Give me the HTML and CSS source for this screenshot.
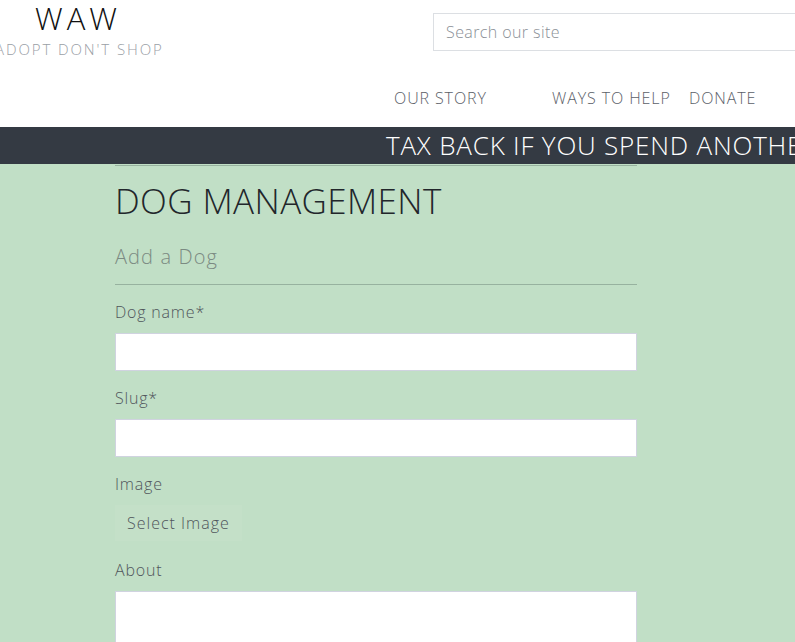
FILE: index.html
```html
<!DOCTYPE html>
<html lang="en">
<head>
<meta charset="utf-8">
<title>WAW - Dog Management</title>
<link rel="stylesheet" href="styles.css">
</head>
<body>
<header class="site-header">
  <div class="header-top">
    <div class="brand">
      <div class="brand-name">WAW</div>
      <div class="brand-tag">ADOPT DON'T SHOP</div>
    </div>
    <div class="search">
      <input class="search-input" type="text" placeholder="Search our site">
    </div>
  </div>
  <nav class="main-nav">
    <a class="nav-link nav-story" href="#">OUR STORY</a>
    <a class="nav-link nav-help" href="#">WAYS TO HELP</a>
    <a class="nav-link" href="#">DONATE</a>
  </nav>
</header>
<div class="ticker">
  <div class="ticker-text">TAX BACK IF YOU SPEND ANOTHER</div>
</div>
<main class="content">
  <div class="panel">
    <h1 class="page-title">DOG MANAGEMENT</h1>
    <h2 class="sub-title">Add a Dog</h2>
    <form class="dog-form">
      <label class="field-label">Dog name*</label>
      <input class="field-input" type="text">
      <label class="field-label">Slug*</label>
      <input class="field-input" type="text">
      <label class="field-label">Image</label>
      <button class="select-btn" type="button">Select Image</button>
      <label class="field-label">About</label>
      <textarea class="field-area"></textarea>
    </form>
  </div>
</main>
</body>
</html>
```

FILE: styles.css
```css
* { box-sizing: border-box; }
html, body { margin: 0; padding: 0; }
body {
  font-family: "Open Sans", "Liberation Sans", sans-serif;
  font-weight: 300;
  background: #c1dfc6;
  overflow: hidden;
  width: 795px;
  height: 642px;
}
.site-header {
  background: #ffffff;
  height: 127px;
}
.header-top {
  display: flex;
  align-items: flex-start;
  height: 62px;
}
.brand {
  flex-shrink: 0;
  width: 172px;
  margin-left: -11px;
  text-align: center;
  white-space: nowrap;
}
.brand-name {
  font-size: 31px;
  line-height: 36px;
  color: #111;
  font-weight: 300;
  letter-spacing: 4px;
  text-indent: 6px;
}
.brand-tag {
  font-size: 15px;
  line-height: 22px;
  color: #9aa0a6;
  font-weight: 300;
  letter-spacing: 1.9px;
  text-indent: 6px;
  margin-top: 2px;
}
.search {
  flex: 1;
  margin-left: 272px;
  padding-top: 13px;
}
.search-input {
  display: block;
  width: 420px;
  height: 38px;
  border: 1px solid #dcdfe3;
  padding: 0 12px;
  font-family: inherit;
  font-weight: 300;
  font-size: 16px;
  letter-spacing: 0.4px;
  color: #333;
  outline: none;
}
.search-input::placeholder { color: #8a8f96; }
.main-nav {
  display: flex;
  padding-left: 394px;
  margin-top: 25px;
  white-space: nowrap;
}
.nav-link {
  font-size: 16px;
  line-height: 22px;
  color: #5b6068;
  text-decoration: none;
  letter-spacing: 0.9px;
}
.nav-story { width: 158px; }
.nav-help { width: 137px; }
.ticker {
  background: #343a43;
  height: 37px;
  overflow: hidden;
  white-space: nowrap;
  padding-left: 386px;
}
.ticker-text {
  font-size: 26px;
  line-height: 37px;
  color: #ffffff;
  font-weight: 300;
  letter-spacing: 0.8px;
}
.content {
  padding-left: 115px;
}
.panel {
  width: 522px;
  border-top: 1px solid #97b29f;
  margin-top: 1px;
}
.page-title {
  margin: 15px 0 0;
  font-size: 35px;
  line-height: 40px;
  font-weight: 300;
  color: #22262b;
  letter-spacing: 0.4px;
}
.sub-title {
  margin: 22px 0 0;
  font-size: 20px;
  line-height: 28px;
  font-weight: 300;
  color: #7b8a82;
  letter-spacing: 1.1px;
  padding-bottom: 13px;
  border-bottom: 1px solid #97b29f;
}
.dog-form {
  display: flex;
  flex-direction: column;
  align-items: flex-start;
  padding-top: 16px;
}
.field-label {
  font-size: 16px;
  line-height: 22px;
  color: #50565c;
  letter-spacing: 0.8px;
  margin-bottom: 10px;
}
.field-input {
  width: 522px;
  height: 38px;
  background: #fff;
  border: 1px solid #d0d3e0;
  margin-bottom: 16px;
  outline: none;
}
.select-btn {
  font-family: inherit;
  font-weight: 300;
  font-size: 16px;
  letter-spacing: 1px;
  color: #50565c;
  background: #c4e0c8;
  border: none;
  padding: 0 12px;
  height: 36px;
  margin-bottom: 18px;
}
.field-area {
  width: 522px;
  height: 120px;
  background: #fff;
  border: 1px solid #d0d3e0;
  resize: none;
}
```
